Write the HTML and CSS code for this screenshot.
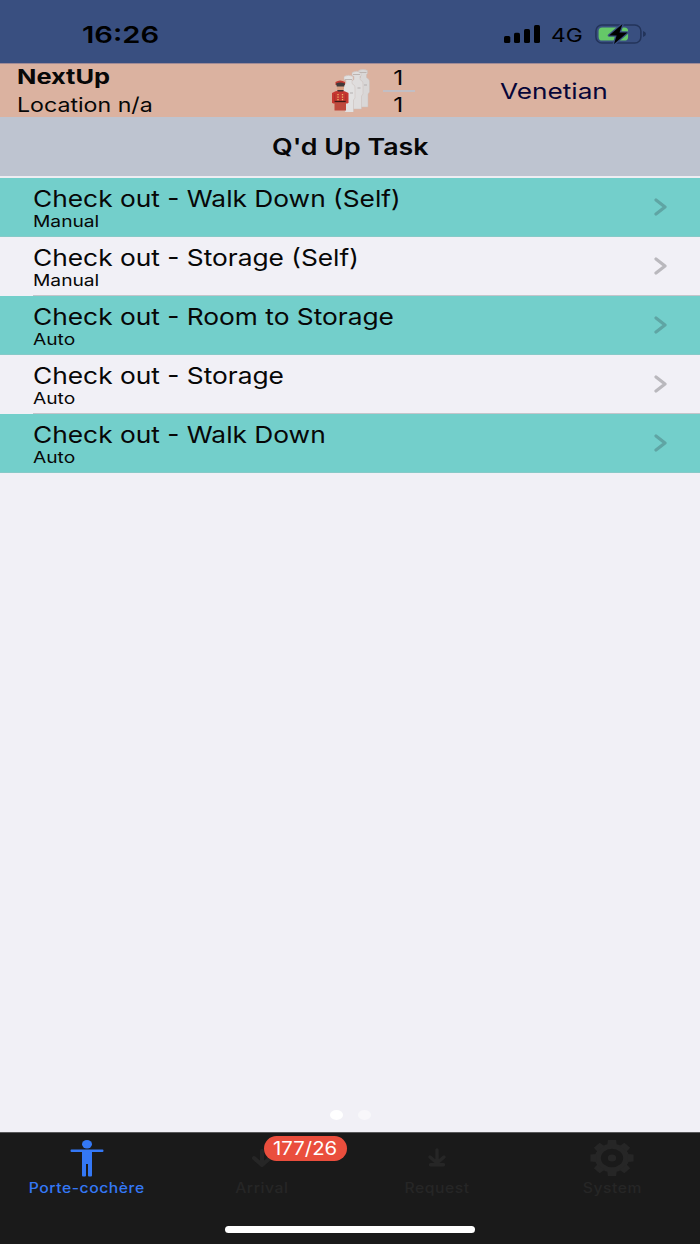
FILE: index.html
```html
<!DOCTYPE html>
<html lang="en">
<head>
<meta charset="utf-8">
<title>Q'd Up Task</title>
<link rel="stylesheet" href="styles.css">
</head>
<body>
<div class="phone">
  <div class="status">
    <span class="wide clock">16:26</span>
    <div class="indicators">
      <svg class="signal" width="37" height="19" viewBox="0 0 37 19"><rect x="0" y="12" width="6.3" height="7" rx="1.6"/><rect x="10" y="8.8" width="6" height="10.2" rx="1.6"/><rect x="20" y="5" width="6" height="14" rx="1.6"/><rect x="30" y="1" width="6" height="18" rx="1.6"/></svg>
      <span class="wide network">4G</span>
      <svg class="battery" width="52" height="22" viewBox="0 0 52 22">
        <rect x="0.9" y="2" width="45" height="18" rx="6" fill="none" stroke="#23345a" stroke-width="1.5"/>
        <path d="M48 8q3 1 3 3t-3 3z" fill="#23345a"/>
        <rect x="3.6" y="4.5" width="29.5" height="13" rx="3.6" fill="#65c868"/>
        <path d="M27.5 1 14 12.4h7.6L19 21l13.5-11.4h-8z" fill="#000" stroke="#394f80" stroke-width="2.6" stroke-linejoin="round" paint-order="stroke"/>
      </svg>
    </div>
  </div>

  <div class="userbar">
    <div class="who">
      <span class="wide name">NextUp</span>
      <span class="wide location">Location n/a</span>
    </div>
    <svg class="porters" width="40" height="44" viewBox="0 0 40 44">
      <defs>
        <path id="porter" d="M2 1.500q4.500-2.500 9 0v3l-1 1v3l2 1.500q1 1 1 3v10l-1.500 2v13H3V25l-2-2V13q0-3 1.500-3.500L4 8.500v-3L2 4.500z"/>
      </defs>
      <g stroke="#c9bdb8" stroke-width=".5">
        <use href="#porter" x="24.500" y="1" fill="#d9d7d7"/>
        <use href="#porter" x="18" y="3" fill="#dfdddd"/>
        <use href="#porter" x="10" y="7" fill="#e2e1e1"/>
      </g>
      <path d="M13 11.500h7M21 6.500h7M27.500 4.500h7" stroke="#bdb5b2" stroke-width="1.200" fill="none"/>
      <path d="M18 25h3M25.500 20h3M32 17h3" stroke="#b3afaf" fill="none"/>
      <path d="M3.500 14q4.500-3 9.500 0v3H3.500z" fill="#c23a32"/>
      <path d="M4 15.500q4-2 9 0l-1 3.500H5z" fill="#403a3b"/>
      <path d="M5 18.500h7v3q-3.500 2-7 0z" fill="#d9a184"/>
      <path d="M0 25q3-2.500 8-2.500t8.500 2.500v9.500l-1 1H1l-1-1z" fill="#c53730"/>
      <path d="M5 22h7l-1 1.500H6z" fill="#463334"/>
      <path d="M2.500 34h11.500v8.500H2.500z" fill="#bf493d"/>
      <path d="M2.500 33.500h11.500" stroke="#3c1917" stroke-width="1.300"/>
      <path d="M6 26v7M10.500 26v7" stroke="#efb96b" stroke-width="1.300" stroke-dasharray="1.300 1.200"/>
      <path d="M2.700 26v8M13.800 26v8" stroke="#9f2a26" stroke-width=".6"/>
    </svg>
    <div class="queue">
      <span class="wide">1</span>
      <i class="rule"></i>
      <span class="wide">1</span>
    </div>
    <span class="wide hotel">Venetian</span>
  </div>

  <div class="heading"><span class="wide title">Q'd Up Task</span></div>

  <div class="tasks">
    <div class="task teal"><div class="label"><span class="wide main">Check out - Walk Down (Self)</span><span class="wide sub">Manual</span></div><svg class="chevron" width="14" height="18" viewBox="0 0 14 18"><path d="M2 2l9 7-9 7"/></svg></div>
    <div class="task"><div class="label"><span class="wide main">Check out - Storage (Self)</span><span class="wide sub">Manual</span></div><svg class="chevron" width="14" height="18" viewBox="0 0 14 18"><path d="M2 2l9 7-9 7"/></svg></div>
    <div class="task teal"><div class="label"><span class="wide main">Check out - Room to Storage</span><span class="wide sub">Auto</span></div><svg class="chevron" width="14" height="18" viewBox="0 0 14 18"><path d="M2 2l9 7-9 7"/></svg></div>
    <div class="task"><div class="label"><span class="wide main">Check out - Storage</span><span class="wide sub">Auto</span></div><svg class="chevron" width="14" height="18" viewBox="0 0 14 18"><path d="M2 2l9 7-9 7"/></svg></div>
    <div class="task teal"><div class="label"><span class="wide main">Check out - Walk Down</span><span class="wide sub">Auto</span></div><svg class="chevron" width="14" height="18" viewBox="0 0 14 18"><path d="M2 2l9 7-9 7"/></svg></div>
  </div>

  <div class="pager"><i class="dot current"></i><i class="dot"></i></div>

  <div class="tabbar">
    <div class="tabs">
      <div class="tab active">
        <svg width="44" height="40" viewBox="0 0 44 40"><ellipse cx="22" cy="6.300" rx="5" ry="4.200"/><path d="M6.500 11.500h31q1 0 1 1.200t-1 1.300H27v23.500q0 1-1 1h-2q-1 0-1-1V26h-2v11.500q0 1-1 1h-2q-1 0-1-1V14H6.500q-1 0-1-1.300t1-1.200z"/></svg>
        <span class="wide">Porte-cochère</span>
      </div>
      <div class="tab">
        <svg width="44" height="40" viewBox="0 0 44 40"><path class="line" d="M22 13v14M14 20l8 7 8-7"/></svg>
        <span class="wide">Arrival</span>
        <b class="badge"><span class="wide">177/26</span></b>
      </div>
      <div class="tab">
        <svg width="44" height="40" viewBox="0 0 44 40"><path class="line thin" d="M22 12v13M15 19l7 6 7-6M15.500 26.800h13"/></svg>
        <span class="wide">Request</span>
      </div>
      <div class="tab">
        <svg width="44" height="40" viewBox="0 0 44 40"><g transform="translate(22 20) scale(1.200 1)"><circle r="11.800" fill="none" stroke="#262626" stroke-width="5"/><circle r="3.500"/><path id="tooth" d="M-4-13l.6-5h6.800l.6 5z"/><use href="#tooth" transform="rotate(45)"/><use href="#tooth" transform="rotate(90)"/><use href="#tooth" transform="rotate(135)"/><use href="#tooth" transform="rotate(180)"/><use href="#tooth" transform="rotate(225)"/><use href="#tooth" transform="rotate(270)"/><use href="#tooth" transform="rotate(315)"/></g></svg>
        <span class="wide">System</span>
      </div>
    </div>
    <div class="home"></div>
  </div>
</div>
</body>
</html>
```
FILE: styles.css
```css
* { box-sizing: border-box; }
body { margin: 0; }
.phone {
  width: 700px; height: 1244px; display: flex; flex-direction: column;
  overflow: hidden; background: #f1f0f6; color: #070707;
  font-family: Inter, "Liberation Sans", sans-serif;
}
.phone svg { flex: none; display: block; }
/* Letterforms are drawn wider than tall, like the rest of the interface */
.wide { display: block; width: max-content; white-space: nowrap; transform: scaleX(1.2); transform-origin: 0 50%; }

.status { height: 63px; background: #394f80; display: flex; justify-content: space-between; padding: 20px 53px 0 82px; }
.clock { font-size: 23.5px; line-height: 30px; font-weight: 600; color: #000; transform: scaleX(1.24); }
.indicators { display: flex; color: #000; }
.signal { margin: 4px 10px 0 0; }
.network { font-size: 19px; line-height: 31px; width: 44px; }
.battery { margin-top: 3px; }

.userbar { height: 54px; background: #dbb2a0; border-top: 1px solid #a08b96; display: flex; }
.who { width: 332px; padding-left: 17px; }
.name { font-size: 20.5px; line-height: 26px; font-weight: 700; transform: scaleX(1.24); }
.location { font-size: 20px; line-height: 30px; transform: scaleX(1.157); }
.porters { margin-top: 4px; }
.queue { width: 32px; margin-left: 11px; display: flex; flex-direction: column; align-items: center; font-size: 20.5px; }
.queue .wide { transform-origin: 50% 50%; line-height: 27px; margin-left: -2px; }
.rule { flex: none; width: 32px; height: 2px; margin: -1px 0; background: #c2bec4; }
.hotel { margin-left: 85px; font-size: 22px; line-height: 54px; color: #070538; transform: scaleX(1.19); }

.heading { height: 59px; background: #bec4d0; display: flex; justify-content: center; }
.title { font-size: 22.3px; line-height: 59px; font-weight: 600; transform-origin: 50% 50%; }

.tasks { border-top: 2px solid #eeedf2; }
.task { height: 59px; display: flex; justify-content: space-between; padding-right: 32px;
  background: linear-gradient(#c4c5cb, #c4c5cb) 33px 58px / 667px 1px no-repeat #f1f0f6; }
.task.teal { background: #73cfcb; border-bottom: 1px solid #86cac8; }
.label { padding: 6px 0 0 33px; }
.main { font-size: 23.3px; line-height: 30px; transform: scaleX(1.129); }
.sub { font-size: 16px; line-height: 16px; margin-top: -1px; }
.chevron { margin-top: 20px; }
.chevron path { fill: none; stroke: #b9b8bd; stroke-width: 3.2; stroke-linecap: round; stroke-linejoin: round; }
.teal .chevron path { stroke: #5fa5a4; }

.pager { margin-top: auto; height: 35px; display: flex; justify-content: center; gap: 15px; padding-top: 13px; }
.dot { width: 13px; height: 10px; border-radius: 50%; background: #f8f7fa; }
.dot.current { background: #fff; }

.tabbar { height: 112px; background: #1a1a1a; border-top: 1px solid #58585a; }
.tabs { display: grid; grid-template-columns: repeat(4, 175px); height: 93px; }
.tab { position: relative; display: flex; flex-direction: column; align-items: center; padding: 5px 1px 0 0;
  color: #262626; font-size: 14px; font-weight: 500; line-height: 20px; }
.tab svg { fill: #262626; }
.tab .wide { transform: scaleX(1.12); transform-origin: 50% 50%; letter-spacing: .5px; }
.tab.active { color: #3478f6; }
.tab.active svg { fill: #3478f6; }
.line { fill: none; stroke: #262626; stroke-width: 4; stroke-linecap: round; stroke-linejoin: round; }
.line.thin { stroke-width: 3.4; }
.badge { position: absolute; left: 89px; top: 3px; width: 83px; height: 25px; border-radius: 13px;
  background: #ea4e3d; color: #fff; display: flex; justify-content: center; font-weight: 400; font-size: 18.5px; line-height: 25px; }
.badge .wide { letter-spacing: 0; transform: scaleX(1.1); }
.home { width: 250px; height: 7px; margin: 0 auto; border-radius: 4px; background: #fff; }
```
